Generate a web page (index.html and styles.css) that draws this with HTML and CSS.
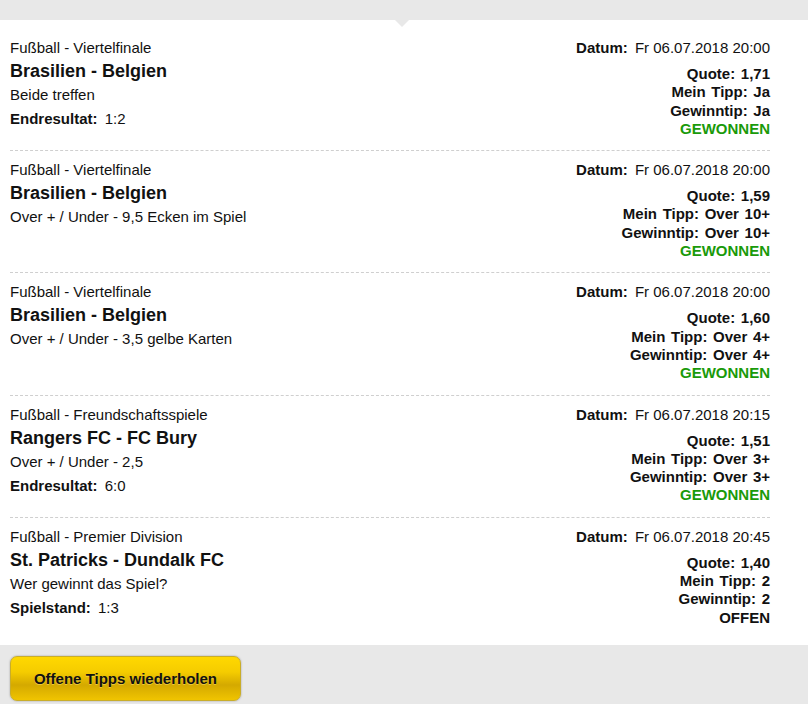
FILE: index.html
```html
<!DOCTYPE html>
<html lang="de">
<head>
<meta charset="utf-8">
<link rel="stylesheet" href="styles.css">
</head>
<body>
<div class="page">
  <div class="topbar"></div>
  <div class="panel">
    <span class="notch"></span>
    <div class="bet">
      <div class="left">
        <div class="cat">Fußball - Viertelfinale</div>
        <div class="match">Brasilien - Belgien</div>
        <div class="market">Beide treffen</div>
        <div class="result"><b>Endresultat:</b> 1:2</div>
      </div>
      <div class="right">
        <div class="date"><b>Datum:</b> Fr 06.07.2018 20:00</div>
        <div class="stats">
          <div>Quote: 1,71</div>
          <div>Mein Tipp: Ja</div>
          <div>Gewinntip: Ja</div>
          <div class="won">GEWONNEN</div>
        </div>
      </div>
    </div>
    <div class="bet">
      <div class="left">
        <div class="cat">Fußball - Viertelfinale</div>
        <div class="match">Brasilien - Belgien</div>
        <div class="market">Over + / Under - 9,5 Ecken im Spiel</div>
      </div>
      <div class="right">
        <div class="date"><b>Datum:</b> Fr 06.07.2018 20:00</div>
        <div class="stats">
          <div>Quote: 1,59</div>
          <div>Mein Tipp: Over 10+</div>
          <div>Gewinntip: Over 10+</div>
          <div class="won">GEWONNEN</div>
        </div>
      </div>
    </div>
    <div class="bet">
      <div class="left">
        <div class="cat">Fußball - Viertelfinale</div>
        <div class="match">Brasilien - Belgien</div>
        <div class="market">Over + / Under - 3,5 gelbe Karten</div>
      </div>
      <div class="right">
        <div class="date"><b>Datum:</b> Fr 06.07.2018 20:00</div>
        <div class="stats">
          <div>Quote: 1,60</div>
          <div>Mein Tipp: Over 4+</div>
          <div>Gewinntip: Over 4+</div>
          <div class="won">GEWONNEN</div>
        </div>
      </div>
    </div>
    <div class="bet">
      <div class="left">
        <div class="cat">Fußball - Freundschaftsspiele</div>
        <div class="match">Rangers FC - FC Bury</div>
        <div class="market">Over + / Under - 2,5</div>
        <div class="result"><b>Endresultat:</b> 6:0</div>
      </div>
      <div class="right">
        <div class="date"><b>Datum:</b> Fr 06.07.2018 20:15</div>
        <div class="stats">
          <div>Quote: 1,51</div>
          <div>Mein Tipp: Over 3+</div>
          <div>Gewinntip: Over 3+</div>
          <div class="won">GEWONNEN</div>
        </div>
      </div>
    </div>
    <div class="bet">
      <div class="left">
        <div class="cat">Fußball - Premier Division</div>
        <div class="match">St. Patricks - Dundalk FC</div>
        <div class="market">Wer gewinnt das Spiel?</div>
        <div class="result"><b>Spielstand:</b> 1:3</div>
      </div>
      <div class="right">
        <div class="date"><b>Datum:</b> Fr 06.07.2018 20:45</div>
        <div class="stats">
          <div>Quote: 1,40</div>
          <div>Mein Tipp: 2</div>
          <div>Gewinntip: 2</div>
          <div>OFFEN</div>
        </div>
      </div>
    </div>
  </div>
  <div class="footer">
    <button class="repeat">Offene Tipps wiederholen</button>
  </div>
</div>
</body>
</html>
```

FILE: styles.css
```css
html, body {
  margin: 0;
  padding: 0;
}
body {
  background: #e8e8e8;
  font-family: "Liberation Sans", Arial, sans-serif;
  font-size: 15px;
  color: #111;
  width: 808px;
  height: 704px;
  overflow: hidden;
}
.topbar {
  height: 20px;
  background: #e8e8e8;
}
.panel {
  position: relative;
  background: #fff;
  padding: 9px 38px 6px 10px;
}
.notch {
  position: absolute;
  top: 0;
  left: 395px;
  width: 0;
  height: 0;
  border-left: 7px solid transparent;
  border-right: 7px solid transparent;
  border-top: 7px solid #e8e8e8;
}
.bet {
  display: flex;
  justify-content: space-between;
  padding: 10px 0 12px;
  border-top: 1px dashed #cfcfcf;
}
.bet:first-of-type {
  border-top: none;
}
.left {
  display: flex;
  flex-direction: column;
}
.cat {
  line-height: 18px;
}
.match {
  font-weight: bold;
  font-size: 18px;
  line-height: 20px;
  margin-top: 4px;
}
.market {
  line-height: 18px;
  margin-top: 5px;
}
.result {
  line-height: 18px;
  margin-top: 6px;
}
.result b, .date b {
  margin-right: 3px;
}
.right {
  display: flex;
  flex-direction: column;
  align-items: flex-end;
}
.date {
  line-height: 18px;
}
.stats {
  margin-top: 8px;
  font-weight: bold;
  text-align: right;
  line-height: 18.3px;
  word-spacing: 1.5px;
}
.won {
  color: #1a9a0a;
}
.footer {
  padding: 11px 10px;
}
.repeat {
  display: block;
  width: 231px;
  height: 45px;
  border: 1px solid #c9ad2a;
  border-radius: 7px;
  background: linear-gradient(to bottom, #ffd800 0%, #f5cc00 35%, #d4a900 65%, #f0c400 100%);
  box-shadow: 0 0 2px rgba(0,0,0,0.35);
  font-family: "Liberation Sans", Arial, sans-serif;
  font-weight: bold;
  font-size: 15px;
  color: #111;
  text-shadow: 0 1px 0 rgba(255,230,120,0.5);
  cursor: pointer;
}
```
